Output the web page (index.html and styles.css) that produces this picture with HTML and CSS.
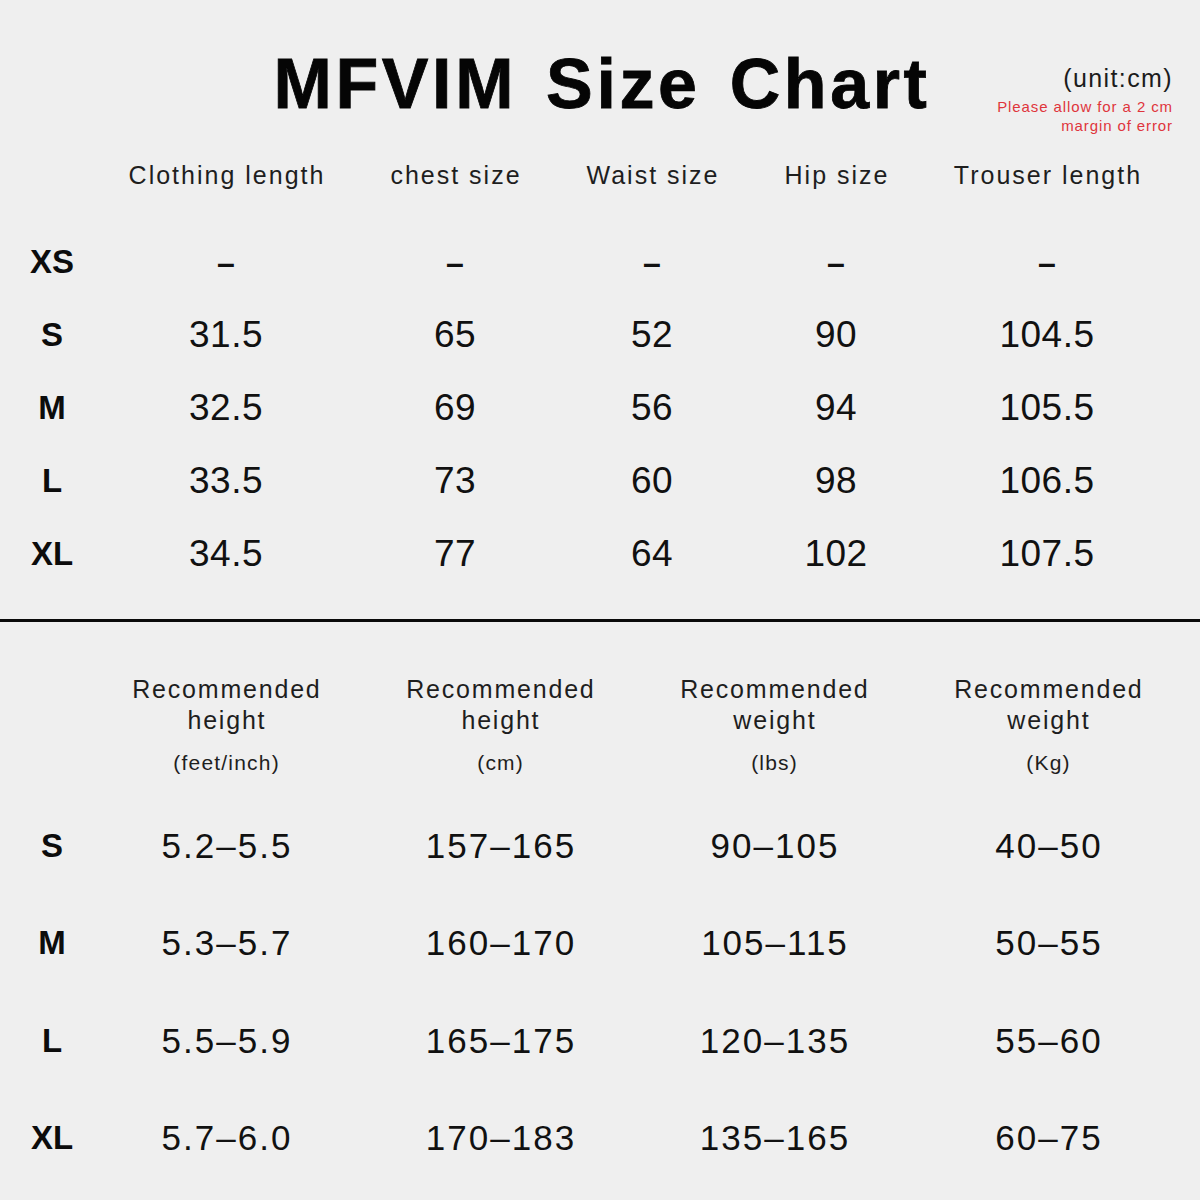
FILE: index.html
```html
<!DOCTYPE html>
<html lang="en">
<head>
<meta charset="utf-8">
<title>MFVIM Size Chart</title>
<link rel="stylesheet" href="styles.css">
</head>
<body>
<div class="page">
  <header class="top">
    <div class="spacer"></div>
    <h1 class="title">MFVIM Size Chart</h1>
    <div class="note">
      <div class="unit">(unit:cm)</div>
      <div class="warn">Please allow for a 2 cm<br>margin of error</div>
    </div>
  </header>

  <section class="measure">
    <div class="m-grid m-head">
      <div></div>
      <div class="hcell">Clothing length</div>
      <div class="hcell">chest size</div>
      <div class="hcell">Waist size</div>
      <div class="hcell">Hip size</div>
      <div class="hcell">Trouser length</div>
    </div>
    <div class="m-grid m-body">
      <div class="lbl">XS</div><div class="num dash">–</div><div class="num dash">–</div><div class="num dash">–</div><div class="num dash">–</div><div class="num dash">–</div>
      <div class="lbl">S</div><div class="num">31.5</div><div class="num">65</div><div class="num">52</div><div class="num">90</div><div class="num">104.5</div>
      <div class="lbl">M</div><div class="num">32.5</div><div class="num">69</div><div class="num">56</div><div class="num">94</div><div class="num">105.5</div>
      <div class="lbl">L</div><div class="num">33.5</div><div class="num">73</div><div class="num">60</div><div class="num">98</div><div class="num">106.5</div>
      <div class="lbl">XL</div><div class="num">34.5</div><div class="num">77</div><div class="num">64</div><div class="num">102</div><div class="num">107.5</div>
    </div>
  </section>

  <div class="divider"></div>

  <section class="recommend">
    <div class="r-grid r-head">
      <div></div>
      <div class="rcell"><span class="rline">Recommended</span><span class="rline">height</span><span class="runit">(feet/inch)</span></div>
      <div class="rcell"><span class="rline">Recommended</span><span class="rline">height</span><span class="runit">(cm)</span></div>
      <div class="rcell"><span class="rline">Recommended</span><span class="rline">weight</span><span class="runit">(lbs)</span></div>
      <div class="rcell"><span class="rline">Recommended</span><span class="rline">weight</span><span class="runit">(Kg)</span></div>
    </div>
    <div class="r-grid r-body">
      <div class="lbl r-lbl">S</div><div class="rnum">5.2–5.5</div><div class="rnum">157–165</div><div class="rnum">90–105</div><div class="rnum">40–50</div>
      <div class="lbl r-lbl">M</div><div class="rnum">5.3–5.7</div><div class="rnum">160–170</div><div class="rnum">105–115</div><div class="rnum">50–55</div>
      <div class="lbl r-lbl">L</div><div class="rnum">5.5–5.9</div><div class="rnum">165–175</div><div class="rnum">120–135</div><div class="rnum">55–60</div>
      <div class="lbl r-lbl">XL</div><div class="rnum">5.7–6.0</div><div class="rnum">170–183</div><div class="rnum">135–165</div><div class="rnum">60–75</div>
    </div>
  </section>
</div>
</body>
</html>
```

FILE: styles.css
```css
* { box-sizing: border-box; }

html, body {
  margin: 0;
  padding: 0;
  background: #efefef;
}

body {
  font-family: "Liberation Sans", Arial, sans-serif;
  color: #111;
}

.page {
  width: 1200px;
  height: 1200px;
  overflow: hidden;
}

/* ---------- header ---------- */
.top {
  display: grid;
  grid-template-columns: 1fr auto 1fr;
  height: 140px;
}

.title {
  margin: 0;
  padding-top: 44px;
  padding-left: 4px;
  font-size: 70px;
  line-height: 80px;
  font-weight: 700;
  letter-spacing: 3.6px;
  word-spacing: 6px;
  color: #050505;
  -webkit-text-stroke: 0.8px #050505;
  white-space: nowrap;
}

.note {
  justify-self: end;
  padding-top: 63px;
  padding-right: 27px;
  text-align: right;
}

.unit {
  font-size: 25px;
  line-height: 30px;
  letter-spacing: 1.4px;
  color: #1c1c1c;
}

.warn {
  margin-top: 4px;
  font-size: 15px;
  line-height: 19px;
  letter-spacing: 0.9px;
  color: #df353c;
}

/* ---------- measurement table ---------- */
.m-grid {
  display: grid;
  grid-template-columns: 104px 244px 214px 180px 188px 234px;
}

.m-head {
  height: 70px;
  margin-bottom: 15px;
  align-items: center;
}

.hcell {
  text-align: center;
  font-size: 25px;
  letter-spacing: 2px;
  padding-left: 2px;
  color: #1e1e1e;
  white-space: nowrap;
}

.m-body {
  grid-auto-rows: 73px;
  align-items: center;
}

.lbl {
  text-align: center;
  font-size: 33px;
  font-weight: 700;
  color: #0c0c0c;
}

.num {
  text-align: center;
  font-size: 37px;
  letter-spacing: 0.5px;
  color: #111;
}

.num.dash {
  font-size: 32px;
  font-weight: 700;
  padding-top: 4px;
  letter-spacing: 0;
}

/* ---------- divider ---------- */
.divider {
  margin-top: 29px;
  height: 3px;
  background: #0a0a0a;
}

/* ---------- recommendation table ---------- */
.r-grid {
  display: grid;
  grid-template-columns: 89px repeat(4, 274px);
}

.r-head {
  padding-top: 52px;
}

.rcell {
  display: flex;
  flex-direction: column;
  align-items: center;
  color: #1e1e1e;
  white-space: nowrap;
}

.rline {
  font-size: 25px;
  line-height: 31px;
  letter-spacing: 1.8px;
  padding-left: 1.8px;
}

.runit {
  margin-top: 14px;
  font-size: 21px;
  line-height: 26px;
  letter-spacing: 1.2px;
  padding-left: 1.2px;
}

.r-body {
  margin-top: 21px;
  grid-auto-rows: 97.5px;
  align-items: center;
}

.r-lbl {
  padding-left: 15px;
}

.rnum {
  text-align: center;
  font-size: 35px;
  letter-spacing: 2px;
  padding-left: 2px;
  color: #111;
}
```
